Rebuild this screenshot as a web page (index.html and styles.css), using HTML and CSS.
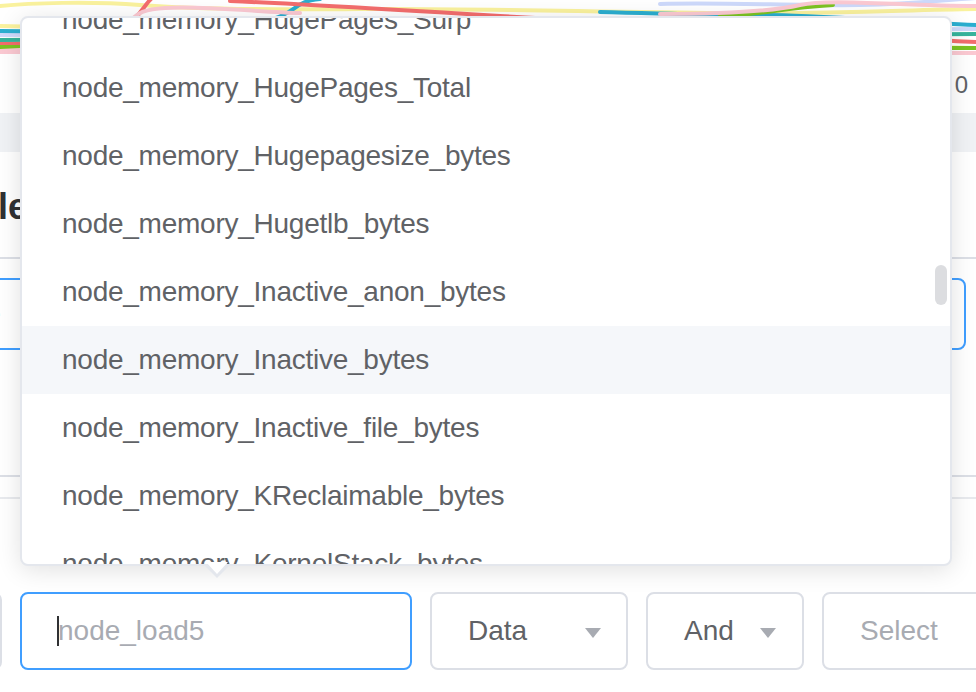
FILE: index.html
```html
<!DOCTYPE html>
<html>
<head>
<meta charset="utf-8">
<link rel="stylesheet" href="styles.css">
</head>
<body>
<div class="page">
  <div class="chart">
    <svg width="976" height="56" viewBox="0 0 976 56">
      <g fill="none" stroke-width="4" stroke-linecap="round" stroke-linejoin="round">
        <path stroke="#faf29e" d="M0 26 C300 30 700 44 976 48"/>
        <path stroke="#faf29e" d="M0 6 C30 3 90 1 140 5 S260 10 360 9 S600 12 720 13 S900 10 976 9"/>
        <path stroke="#cdd9fb" d="M0 35 C300 34 700 31 976 29"/>
        <path stroke="#cdd9fb" d="M660 4 C720 2 800 6 860 5 S940 0 976 -2"/>
        <path stroke="#2baed0" d="M0 31 C100 32 220 30 260 22 S290 2 320 -1"/>
        <path stroke="#2baed0" d="M600 12 C680 14 720 16 760 15 S900 22 976 25"/>
        <path stroke="#36b49c" d="M0 40 C300 39 700 36 976 34"/>
        <path stroke="#f36d6d" d="M0 44 C60 44 110 40 125 28 S145 4 152 -2"/>
        <path stroke="#f36d6d" d="M230 1 C300 4 400 10 500 16 S700 24 800 28 S900 40 976 42"/>
        <path stroke="#7cc322" d="M0 47 C300 48 700 48 976 48"/>
        <path stroke="#7cc322" d="M720 16 C760 15 780 8 833 5"/>
        <path stroke="#fbc9d2" d="M0 51 C60 50 120 30 137 15 S250 12 300 13"/>
        <path stroke="#fbc9d2" d="M660 14 C720 14 770 12 800 5 S900 6 976 6"/>
        <path stroke="#fbc9d2" d="M0 52 C300 52 700 53 976 53"/>
      </g>
    </svg>
  </div>
  <div class="axis"><span>0</span></div>
  <div class="band"></div>
  <div class="heading">Rule</div>
  <div class="divider"></div>
  <div class="tabbox">Table</div>
  <div class="rule rule-a"></div>
  <div class="rule rule-b"></div>
  <div class="form">
    <div class="box box-prev"></div>
    <div class="box box-input active"><span class="caret"></span><span class="placeholder">node_load5</span></div>
    <div class="box box-data"><span class="value">Data</span><span class="tri"></span></div>
    <div class="box box-and"><span class="value">And</span><span class="tri"></span></div>
    <div class="box box-select"><span class="placeholder">Select</span></div>
  </div>

  <div class="dropdown">
    <div class="menu">
      <ul class="items">
        <li>node_memory_HugePages_Surp</li>
        <li>node_memory_HugePages_Total</li>
        <li>node_memory_Hugepagesize_bytes</li>
        <li>node_memory_Hugetlb_bytes</li>
        <li>node_memory_Inactive_anon_bytes</li>
        <li class="hover">node_memory_Inactive_bytes</li>
        <li>node_memory_Inactive_file_bytes</li>
        <li>node_memory_KReclaimable_bytes</li>
        <li>node_memory_KernelStack_bytes</li>
      </ul>
    </div>
    <div class="thumb"></div>
    <div class="arrow"></div>
  </div>
</div>
</body>
</html>
```

FILE: styles.css
```css
html, body {
  margin: 0;
  padding: 0;
  background: #ffffff;
}
body {
  width: 976px;
  height: 692px;
  overflow: hidden;
  font-family: "Liberation Sans", Arial, sans-serif;
}
.page {
  position: relative;
  width: 976px;
  height: 692px;
  overflow: hidden;
}
.chart {
  height: 56px;
}
.chart svg {
  display: block;
}
.axis {
  height: 57px;
  display: flex;
  align-items: center;
  justify-content: flex-end;
  padding-right: 8px;
  font-size: 24px;
  color: #606266;
}
.band {
  height: 39px;
  background: #f0f2f5;
}
.heading {
  height: 70px;
  padding-top: 35px;
  line-height: 40px;
  font-size: 36px;
  font-weight: bold;
  color: #303133;
  margin-left: -50px;
  white-space: nowrap;
}
.divider {
  height: 2px;
  background: #dcdfe6;
}
.tabbox {
  margin-top: 19px;
  margin-left: -100px;
  width: 1066px;
  height: 72px;
  box-sizing: border-box;
  border: 2px solid #409eff;
  border-radius: 8px;
  padding-left: 32px;
  line-height: 68px;
  font-size: 28px;
  color: #409eff;
}
.rule {
  height: 2px;
}
.rule-a {
  margin-top: 125px;
  background: #dcdfe6;
}
.rule-b {
  margin-top: 20px;
  background: #e8eaee;
}
.form {
  margin-top: 93px;
  margin-left: -96px;
  display: flex;
  gap: 18px;
  height: 78px;
}
.box {
  flex: none;
  height: 78px;
  box-sizing: border-box;
  border: 2px solid #dcdfe6;
  border-radius: 8px;
  display: flex;
  align-items: center;
  font-size: 28px;
  color: #606266;
  background: #fff;
}
.box.active {
  border-color: #409eff;
}
.box-prev {
  width: 98px;
}
.box-input {
  width: 392px;
  padding-left: 35px;
}
.caret {
  width: 2px;
  height: 30px;
  background: #303133;
  margin-right: -1px;
}
.placeholder {
  color: #a8abb2;
}
.box-data {
  width: 198px;
  padding: 0 25px 0 36px;
  justify-content: space-between;
}
.box-and {
  width: 158px;
  padding: 0 26px 0 36px;
  justify-content: space-between;
}
.box-select {
  width: 300px;
  padding-left: 36px;
}
.tri {
  width: 0;
  height: 0;
  border-left: 8px solid transparent;
  border-right: 8px solid transparent;
  border-top: 10px solid #a8abb2;
  margin-top: 3px;
}
.dropdown {
  position: absolute;
  left: 20px;
  top: 16px;
  width: 932px;
  height: 550px;
  box-sizing: border-box;
  border: 2px solid #e4e7ed;
  border-radius: 8px;
  background: #fff;
  box-shadow: 0 4px 24px rgba(0, 0, 0, 0.12);
}
.menu {
  height: 100%;
  overflow: hidden;
  border-radius: 6px;
}
.items {
  list-style: none;
  margin: -32px 0 0;
  padding: 0;
}
.items li {
  height: 68px;
  line-height: 68px;
  padding: 0 40px;
  font-size: 28px;
  letter-spacing: -0.25px;
  color: #606266;
  white-space: nowrap;
}
.items li.hover {
  background: #f5f7fa;
}
.thumb {
  position: absolute;
  right: 3px;
  top: 247px;
  width: 12px;
  height: 40px;
  border-radius: 6px;
  background: #dcdde0;
}
.arrow {
  position: absolute;
  left: 182px;
  top: 547px;
  width: 0;
  height: 0;
}
.arrow::before,
.arrow::after {
  content: "";
  position: absolute;
  width: 0;
  height: 0;
  border-style: solid;
  border-bottom-width: 0;
}
.arrow::before {
  left: 0;
  top: 0;
  border-width: 13px 13px 0 13px;
  border-color: #e4e7ed transparent transparent transparent;
}
.arrow::after {
  left: 2px;
  top: -3px;
  border-width: 12px 11px 0 11px;
  border-color: #ffffff transparent transparent transparent;
}
```
